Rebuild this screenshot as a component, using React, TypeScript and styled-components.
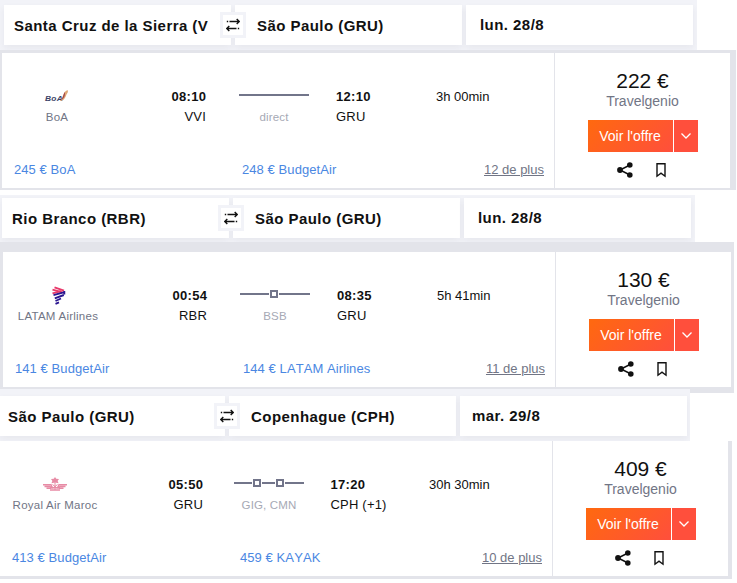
import React from "react";
import styled, { createGlobalStyle } from "styled-components";

const GlobalStyle = createGlobalStyle`
  * { box-sizing: border-box; }
  body {
    margin: 0;
    background: #fff;
    color: #111;
    font-family: "Liberation Sans", Arial, sans-serif;
    font-size: 13px;
    overflow: hidden;
  }
`;

const Page = styled.main`
  width: 737px;
  height: 583px;
  overflow: hidden;
`;

const SearchBar = styled.div<{ $width: number; $height: number; $pad: string; $shift: number }>`
  position: relative;
  display: flex;
  gap: 4px;
  width: ${(p) => p.$width}px;
  height: ${(p) => p.$height}px;
  padding: ${(p) => p.$pad};
  margin-top: ${(p) => p.$shift}px;
  background: #f2f3f8;
  overflow: hidden;
`;

const Field = styled.div<{ $width: number; $pad: number; $lift?: number }>`
  flex: none;
  width: ${(p) => p.$width}px;
  height: 40px;
  padding: 1px 23px 0 ${(p) => p.$pad}px;
  background: #fff;
  box-shadow: 0 3px 7px rgba(40, 42, 60, 0.055);
  font-size: 15px;
  font-weight: 700;
  letter-spacing: 0.45px;
  line-height: ${(p) => (p.$lift ? 38 : 40)}px;
`;

const FieldText = styled.div`
  overflow: hidden;
  white-space: nowrap;
`;

const Swap = styled.div<{ $left: number; $top: number }>`
  position: absolute;
  left: ${(p) => p.$left}px;
  top: ${(p) => p.$top}px;
  display: grid;
  place-items: center;
  width: 26px;
  height: 26px;
  border: 3px solid #f2f3f8;
  background: #fff;
`;

const CardFrame = styled.section<{ $frame: string; $width: number; $gap: number }>`
  width: ${(p) => p.$width}px;
  padding: ${(p) => p.$frame};
  margin-bottom: ${(p) => p.$gap}px;
  background: #e3e4ea;
`;

const Card = styled.div`
  display: flex;
  width: 728px;
  height: 135px;
  background: #fff;
`;

const Details = styled.div`
  display: flex;
  flex-direction: column;
  justify-content: space-between;
  width: 552px;
  padding: 34px 0 8px;
`;

const Leg = styled.div<{ $columns: string }>`
  display: grid;
  grid-template-columns: ${(p) => p.$columns};
  line-height: 20px;
  white-space: nowrap;
`;

const Airline = styled.div`
  display: flex;
  flex-direction: column;
  align-items: center;
  color: #717585;
  font-size: 11.5px;
  letter-spacing: 0.24px;
`;

const LogoBox = styled.div`
  display: grid;
  place-items: center;
  height: 20px;
  padding-bottom: 2px;
  svg { display: block; overflow: visible; }
`;

const Departure = styled.div`
  text-align: right;
`;

const Arrival = styled.div`
  text-align: left;
`;

const Time = styled.div`
  margin-right: -0.3px;
  font-weight: 700;
  letter-spacing: 0.3px;
`;

const Airport = styled.div`
  font-kerning: none;
  letter-spacing: 0.2px;
`;

const Route = styled.div`
  width: 70px;
  color: #a6a9b5;
  font-size: 11.5px;
  letter-spacing: 0.15px;
  text-align: center;
`;

const RouteLine = styled.div`
  display: flex;
  align-items: center;
  height: 16px;
  margin-bottom: 4px;
`;

const Segment = styled.i<{ $length: number }>`
  width: ${(p) => p.$length}px;
  height: 2px;
  background: #72758a;
`;

const StopMark = styled.i`
  width: 8px;
  height: 8px;
  margin: 0 1px;
  border: 2px solid #72758a;
`;

const Offers = styled.div`
  display: flex;
  padding: 0 10px 0 12px;
  line-height: 20px;
  color: #4a87e2;
  font-kerning: none;
  letter-spacing: 0.08px;
`;

const OfferLink = styled.span`
  width: 228px;
`;

const More = styled.span`
  margin-left: auto;
  color: #717585;
  font-kerning: normal;
  letter-spacing: 0;
  text-decoration: underline;
`;

const PricePane = styled.aside`
  display: flex;
  flex-direction: column;
  align-items: center;
  width: 176px;
  padding-top: 16px;
  border-left: 1px solid #e3e4ea;
`;

const Price = styled.div`
  font-size: 21px;
  line-height: 24px;
`;

const Seller = styled.div`
  color: #717585;
  font-size: 14px;
  line-height: 16px;
`;

const Buttons = styled.div`
  display: flex;
  gap: 1px;
  margin: 11px 0 0 1px;
`;

const OfferButton = styled.button`
  width: 85px;
  height: 32px;
  padding: 0 1px 0 0;
  border: 0;
  background: linear-gradient(135deg, #ff690f, #ff4f3c);
  color: #fff;
  font: 14px "Liberation Sans", Arial, sans-serif;
`;

const MenuButton = styled.button`
  display: grid;
  place-items: center;
  width: 24px;
  height: 32px;
  padding: 0;
  border: 0;
  background: #ff4f3c;
`;

const Actions = styled.div`
  display: flex;
  gap: 23px;
  margin: 10px 2px 0 0;
`;

const SwapIcon = () => (
  <svg width="14" height="14" viewBox="0 0 14 14" fill="none" stroke="#111" strokeWidth="1.4">
    <path d="M.8 3.500h1.400M3.500 3.500h9.500M10.700 1l2.500 2.500-2.500 2.500M13.200 10.500h-1.400M10.500 10.500H1M3.300 8L.8 10.500l2.500 2.500" />
  </svg>
);

const ChevronIcon = () => (
  <svg width="10" height="6" viewBox="0 0 10 6" fill="none" stroke="#fff" strokeWidth="1.3">
    <path d="M.5.5L5 5 9.500.5" />
  </svg>
);

const ShareIcon = () => (
  <svg width="16" height="16" viewBox="0 0 16 16" fill="#111" stroke="#111">
    <path d="M13 3L3 8l10 5" fill="none" strokeWidth="1.500" />
    <g stroke="none">
      <circle cx="12.800" cy="3" r="2.800" />
      <circle cx="3" cy="8" r="2.900" />
      <circle cx="12.800" cy="13" r="2.800" />
    </g>
  </svg>
);

const BookmarkIcon = () => (
  <svg width="10" height="16" viewBox="0 0 10 16" fill="none" stroke="#111" strokeWidth="1.4">
    <path d="M1 1.700h8v12.500l-4-3-4 3z" />
  </svg>
);

const BoaLogo = () => (
  <svg width="24" height="14" viewBox="0 0 24 14">
    <text x="0" y="12" fontSize="8" fontWeight="700" fontStyle="italic" fill="#3d4568" textLength="18" lengthAdjust="spacingAndGlyphs">BoA</text>
    <path d="M15 12C19 8 17.500 3 22.500 1c1.200 2-.3 3-1 4.500C20.500 8 19.500 11.500 15 12z" fill="#dfa876" />
    <path d="M15.500 11.500c2.500-2 2.500-6 4.500-8.500.3 3-.5 6.500-4.500 8.500z" fill="#a2484a" />
  </svg>
);

const LatamLogo = () => (
  <svg width="13" height="19" viewBox="0 0 13 19" fill="none" strokeWidth="1.900">
    <path d="M2.500 1.300l9.500 3.400M.5 3.700l10 2.700" stroke="#e8386a" />
    <path d="M.5 7.300L9 5.200" stroke="#e8386a" />
    <path d="M1.500 9.200l11-3M12.300 5v3.500M2.800 12.300l9-3.300M3.500 15l5.500-2.500M3.500 17.800l3.500-1.500" stroke="#2b1690" />
  </svg>
);

const MarocLogo = () => (
  <svg width="24" height="14" viewBox="0 0 24 14" fill="none" stroke="#e78ba5">
    <path d="M0 7.800h8l1.500 3h5l1.500-3h8M1.500 9.500H7l2 2M22.500 9.500H17l-2 2M3.500 11.300H8M20.500 11.300H16M7 13h10" strokeWidth="1.400" />
    <path d="M12 0l1.200 1.800 2.800.1-1.400 2 1 2.400L12 5.500 8.400 6.300l1-2.400L8 1.900l2.800-.1z" fill="#e78ba5" stroke="none" />
    <path d="M12 5v8M9.500 7.500l5 4M14.500 7.500l-5 4" />
  </svg>
);

interface Flight {
  from: string;
  to: string;
  date: string;
  bar: { width: number; height: number; pad: string; shift: number; first: number; firstPad: number; datePad: number; swap: [number, number] };
  frame: { pad: string; width: number; gap: number };
  columns: string;
  logo: React.ReactNode;
  airline: string;
  depart: [string, string];
  arrive: [string, string];
  segments: number[];
  via: string;
  duration: string;
  offers: [string, string];
  more: string;
  price: string;
}

const flights: Flight[] = [
  {
    from: "Santa Cruz de la Sierra (VVI)", to: "São Paulo (GRU)", date: "lun. 28/8",
    bar: { width: 697, height: 50, pad: "5px 0 0 4px", shift: 0, first: 227, firstPad: 10, datePad: 14, swap: [220, 12] },
    frame: { pad: "3px 6px 2px 2px", width: 736, gap: 5 },
    columns: "110px 94px 33px 97px 100px 1fr",
    logo: <BoaLogo />, airline: "BoA", depart: ["08:10", "VVI"], arrive: ["12:10", "GRU"],
    segments: [70], via: "direct", duration: "3h 00min", offers: ["245 € BoA", "248 € BudgetAir"],
    more: "12 de plus", price: "222 €",
  },
  {
    from: "Rio Branco (RBR)", to: "São Paulo (GRU)", date: "lun. 28/8",
    bar: { width: 695, height: 47, pad: "3px 0 0 2px", shift: 0, first: 227, firstPad: 10, datePad: 14, swap: [218, 10] },
    frame: { pad: "10px 3px 6px 3px", width: 734, gap: 0 },
    columns: "110px 94px 33px 97px 100px 1fr",
    logo: <LatamLogo />, airline: "LATAM Airlines", depart: ["00:54", "RBR"], arrive: ["08:35", "GRU"],
    segments: [29, 31], via: "BSB", duration: "5h 41min", offers: ["141 € BudgetAir", "144 € LATAM Airlines"],
    more: "11 de plus", price: "130 €",
  },
  {
    from: "São Paulo (GRU)", to: "Copenhague (CPH)", date: "mar. 29/8",
    bar: { width: 690, height: 52, pad: "7px 0 0 0", shift: -4, first: 225, firstPad: 8, datePad: 12, swap: [214, 14] },
    frame: { pad: "0 4px 3px 0", width: 732, gap: 0 },
    columns: "110px 93px 31px 96.5px 98.5px 1fr",
    logo: <MarocLogo />, airline: "Royal Air Maroc", depart: ["05:50", "GRU"], arrive: ["17:20", "CPH (+1)"],
    segments: [18, 13, 19], via: "GIG, CMN", duration: "30h 30min", offers: ["413 € BudgetAir", "459 € KAYAK"],
    more: "10 de plus", price: "409 €",
  },
];

const FlightBlock = ({ flight: f }: { flight: Flight }) => (
  <>
    <SearchBar $width={f.bar.width} $height={f.bar.height} $pad={f.bar.pad} $shift={f.bar.shift}>
      <Field $width={f.bar.first} $pad={f.bar.firstPad}><FieldText>{f.from}</FieldText></Field>
      <Field $width={227} $pad={22}><FieldText>{f.to}</FieldText></Field>
      <Field $width={227} $pad={f.bar.datePad} $lift={1}><FieldText>{f.date}</FieldText></Field>
      <Swap $left={f.bar.swap[0]} $top={f.bar.swap[1]}><SwapIcon /></Swap>
    </SearchBar>
    <CardFrame $frame={f.frame.pad} $width={f.frame.width} $gap={f.frame.gap}>
      <Card>
        <Details>
          <Leg $columns={f.columns}>
            <Airline><LogoBox>{f.logo}</LogoBox>{f.airline}</Airline>
            <Departure><Time>{f.depart[0]}</Time><Airport>{f.depart[1]}</Airport></Departure>
            <span />
            <Route>
              <RouteLine>
                {f.segments.map((length, i) => (
                  <React.Fragment key={i}>
                    {i > 0 && <StopMark />}
                    <Segment $length={length} />
                  </React.Fragment>
                ))}
              </RouteLine>
              {f.via}
            </Route>
            <Arrival><Time>{f.arrive[0]}</Time><Airport>{f.arrive[1]}</Airport></Arrival>
            <div>{f.duration}</div>
          </Leg>
          <Offers>
            <OfferLink>{f.offers[0]}</OfferLink>
            <OfferLink>{f.offers[1]}</OfferLink>
            <More>{f.more}</More>
          </Offers>
        </Details>
        <PricePane>
          <Price>{f.price}</Price>
          <Seller>Travelgenio</Seller>
          <Buttons>
            <OfferButton>Voir l'offre</OfferButton>
            <MenuButton aria-label="Plus d'offres"><ChevronIcon /></MenuButton>
          </Buttons>
          <Actions><ShareIcon /><BookmarkIcon /></Actions>
        </PricePane>
      </Card>
    </CardFrame>
  </>
);

export default function App() {
  return (
    <>
      <GlobalStyle />
      <Page>
        {flights.map((flight) => <FlightBlock key={flight.airline} flight={flight} />)}
      </Page>
    </>
  );
}
